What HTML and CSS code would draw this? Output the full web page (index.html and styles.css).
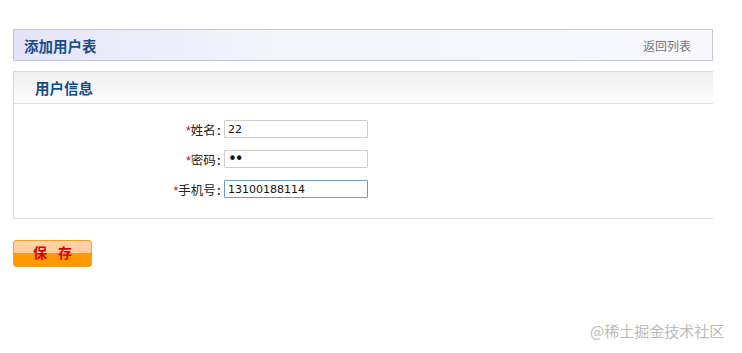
FILE: index.html
```html
<!DOCTYPE html>
<html lang="zh">
<head>
  <meta charset="UTF-8" />
  <title>添加用户表</title>
  <link rel="stylesheet" href="styles.css">
</head>
<body>
  <div class="page">
    <div class="title-bar">
      <span class="title">添加用户表</span>
      <a class="back" href="#">返回列表</a>
    </div>

    <div class="panel">
      <div class="panel-head">用户信息</div>
      <div class="panel-body">
        <div class="row">
          <label><em>*</em>姓名<b>:</b></label>
          <input type="text" value="22">
        </div>
        <div class="row">
          <label><em>*</em>密码<b>:</b></label>
          <input type="password" class="pwd" value="22">
        </div>
        <div class="row">
          <label><em>*</em>手机号<b>:</b></label>
          <input type="text" class="focus" value="13100188114">
        </div>
      </div>
    </div>

    <button class="save">保 存</button>
  </div>
  <div class="watermark">@稀土掘金技术社区</div>
</body>
</html>
```

FILE: styles.css
```css
* {
  margin: 0;
  padding: 0;
  box-sizing: border-box;
}

body {
  background: #fff;
  font-family: "Liberation Sans", "Noto Sans CJK SC", sans-serif;
  font-size: 12px;
  color: #333;
}

.page {
  width: 713px;
  padding: 29px 0 0 13px;
}

.title-bar {
  height: 32px;
  border: 1px solid #c4c4e4;
  background: linear-gradient(to right, #e4e4f8, #f6f6fd 40%, #f7f7fd);
  display: flex;
  align-items: center;
  justify-content: space-between;
  padding: 0 21px 0 10px;
}

.title {
  font-family: "Noto Sans CJK SC", sans-serif;
  font-size: 14.5px;
  font-weight: bold;
  color: #164c8a;
}

.back {
  color: #777;
  text-decoration: none;
  font-size: 12px;
}

.panel {
  margin-top: 10px;
  border: 1px solid #dcdcdc;
  border-right: none;
  height: 148px;
}

.panel-head {
  height: 32px;
  border-bottom: 1px solid #dcdcdc;
  background: linear-gradient(to bottom, #f0f0f0, #fdfdfd);
  padding-left: 21px;
  line-height: 31px;
  font-family: "Noto Sans CJK SC", sans-serif;
  font-size: 14.5px;
  font-weight: bold;
  color: #164c8a;
}

.panel-body {
  padding-top: 10px;
}

.row {
  display: flex;
  align-items: center;
  height: 30px;
}

.row label {
  width: 210px;
  text-align: right;
  color: #222;
  font-size: 12.5px;
}

.row label em {
  font-style: normal;
  color: #c00;
}

.row label b {
  margin: 0 3px 0 1px;
}

.row input {
  width: 144px;
  height: 18px;
  border: 1px solid #cfcfcf;
  border-radius: 1px;
  padding: 0 3px;
  font-family: "DejaVu Sans", sans-serif;
  font-size: 11px;
  color: #111;
  outline: none;
}

.row input.pwd {
  font-size: 15px;
  letter-spacing: -2px;
}

.row input.focus {
  border-color: #6d9cc4;
}

.save {
  display: block;
  margin-top: 21px;
  width: 79px;
  height: 27px;
  border: 1px solid #f0a030;
  border-radius: 3px;
  background: linear-gradient(to bottom, #ffd3a6 0, #ffcc99 50%, #ff9900 50%, #ff9900 100%);
  color: #d80000;
  font-family: "Noto Sans CJK SC", sans-serif;
  font-size: 14px;
  font-weight: bold;
  word-spacing: 8px;
  line-height: 22px;
  padding-bottom: 4px;
}

.watermark {
  position: absolute;
  left: 590px;
  top: 320px;
  font-family: "Noto Sans CJK SC", sans-serif;
  font-size: 15px;
  color: #bbb;
}
```
